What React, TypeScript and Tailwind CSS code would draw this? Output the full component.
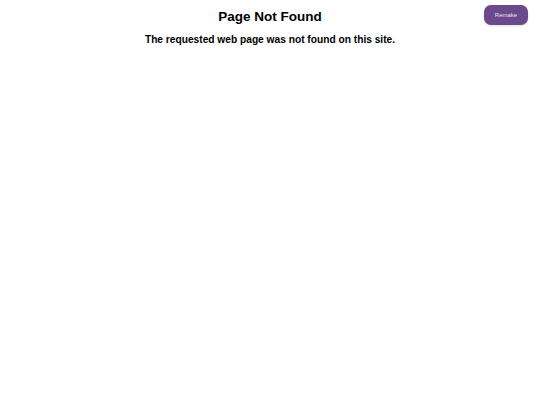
export default function App() {
  return (
    <div className="relative min-h-[405px] bg-white font-['Liberation_Sans',Arial,sans-serif] text-black">
      <div className="flex flex-col items-center pt-[8px]">
        <h1 className="text-[13.5px] font-bold leading-[18px]">Page Not Found</h1>
        <p className="mt-[7px] text-[10.2px] font-bold leading-[14px]">
          The requested web page was not found on this site.
        </p>
      </div>
      <button className="absolute right-[12px] top-[5px] h-[20px] w-[44px] rounded-[7px] bg-[#6b4a8b] text-[6px] text-[#e8e0f0] shadow-sm">
        Remake
      </button>
    </div>
  );
}
